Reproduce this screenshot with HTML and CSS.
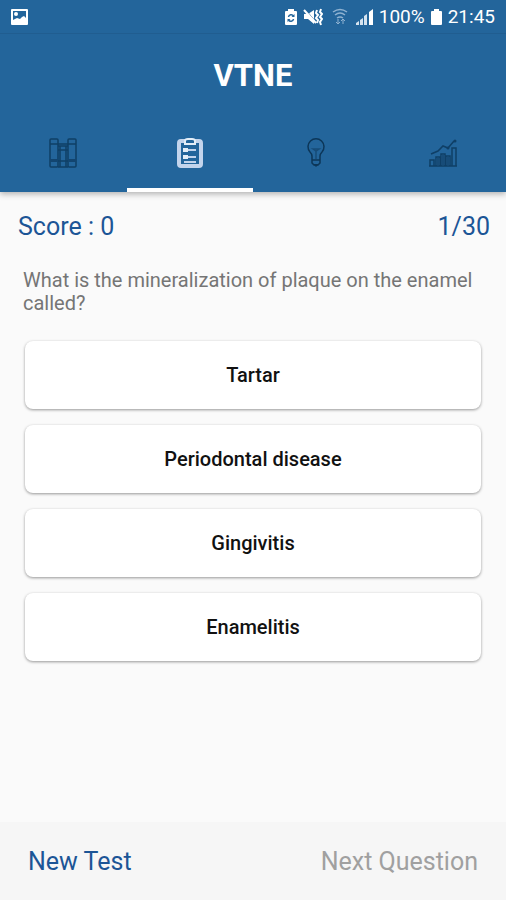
FILE: index.html
```html
<!DOCTYPE html>
<html lang="en">
<head>
<meta charset="utf-8">
<meta name="viewport" content="width=device-width, initial-scale=1">
<title>VTNE</title>
<link rel="stylesheet" href="styles.css">
</head>
<body>
<div class="screen">
  <header class="header">
    <div class="status">
      <svg class="status-photo" width="18" height="18" viewBox="0 0 18 18" aria-hidden="true">
        <rect x="1" y="1" width="17" height="16" rx="1" fill="#fff"/>
        <path d="M3 3h13v7l-2-2-2 1-2 2-3-1-4 2z" fill="#23659b"/>
        <circle cx="6" cy="6" r="2" fill="#fff"/>
      </svg>
      <div class="status-right">
        <svg width="14" height="18" viewBox="0 0 14 18" aria-hidden="true">
          <path d="M4 1h6v2h2q1 0 1 1v12q0 1-1 1H2q-1 0-1-1V4q0-1 1-1h2z" fill="#fff"/>
          <path d="M4.500 9a2.700 2.700 0 0 1 5-1M9.500 11a2.700 2.700 0 0 1-5 1" fill="none" stroke="#23659b" stroke-width="1.500"/>
          <path d="M10.500 6v3h-3zM3.500 14v-3h3z" fill="#23659b"/>
        </svg>
        <svg width="20" height="18" viewBox="0 0 20 18" aria-hidden="true">
          <path d="M1 6h4l6-4v14l-6-5H1z" fill="#fff"/>
          <path d="M2 1l11 13" stroke="#23659b"/>
          <path d="M1 2l12 13" stroke="#fff" stroke-width="2"/>
          <path d="M14 2l-1 3 2 2-2 3 2 2-1 3M18 1l-1 3 2 2-2 3 2 2-2 3 1 3" fill="none" stroke="#fff" stroke-width="2"/>
        </svg>
        <svg class="status-wifi" width="16" height="18" viewBox="0 0 16 18" aria-hidden="true">
          <path d="M1 4q7-5 14 0M3 7q5-4 10 0M5 10q3-2 6 0" fill="none" stroke="#8fb2d1" stroke-width="1.500"/>
          <path d="M6 11v5M4 14l2 2 2-2M11 16v-5M9 13l2-2 2 2" fill="none" stroke="#8fb2d1"/>
        </svg>
        <svg width="19" height="18" viewBox="0 0 19 18" aria-hidden="true">
          <path d="M1 17v-2l3-2v4zM5 17v-5l3-2v7zM9 17V8l3-2v11z" fill="#d5e3ef"/>
          <path d="M14 17V4l4-3v16z" fill="#fff"/>
        </svg>
        <span class="status-percent">100%</span>
        <svg width="13" height="18" viewBox="0 0 13 18" aria-hidden="true">
          <path d="M4 1h5v2h2q1 0 1 1v12q0 1-1 1H2q-1 0-1-1V4q0-1 1-1h2z" fill="#fff"/>
        </svg>
        <time>21:45</time>
      </div>
    </div>
    <h1 class="title">VTNE</h1>
    <nav class="tabs">
      <a class="tab" href="#library" aria-label="Library">
        <svg width="30" height="32" viewBox="0 0 30 32" aria-hidden="true">
          <g fill="none" stroke="#0f3f66" stroke-width="1.500">
            <rect x="2" y="2" width="8" height="28" rx="1"/>
            <rect x="20" y="2" width="8" height="28" rx="1"/>
            <path d="M10 7h10M10 9h10M10 13h10M10 24h10M10 30h10M12 9v21M18 9v21M2 7h8M20 7h8"/>
          </g>
          <path d="M2 22h8v3H2zM20 22h8v3h-8z" fill="#124570"/>
        </svg>
      </a>
      <a class="tab tab-active" href="#test" aria-label="Test" aria-current="page">
        <svg width="30" height="32" viewBox="0 0 30 32" aria-hidden="true">
          <rect x="4" y="4" width="22" height="25" rx="2" fill="none" stroke="#c3d4ec" stroke-width="4"/>
          <path d="M10 4q0-2 3-2h4q3 0 3 2v3H10z" fill="#23659b" stroke="#e3edf7" stroke-width="2"/>
          <path d="M8 11h5v4H8zM8 18h5v4H8z" fill="#e3edf7"/>
          <path d="M13 13h8M13 20h8M9 25h12" stroke="#c3d4ec" stroke-width="2"/>
        </svg>
      </a>
      <a class="tab" href="#tips" aria-label="Tips">
        <svg width="30" height="32" viewBox="0 0 30 32" aria-hidden="true">
          <g fill="none" stroke="#0c3658" stroke-width="1.500">
            <path d="M11 23v-4q0-2-2-4a8 8 0 1 1 12 0q-2 2-2 4v4zM11 23v3l2 2h4l2-2v-3"/>
          </g>
          <path d="M15 22v-8M12 12l3 2 3-2z" fill="none" stroke="#174c78" stroke-width="1.500"/>
          <path d="M12 27h6l-3 3z" fill="#0c3658"/>
        </svg>
      </a>
      <a class="tab" href="#progress" aria-label="Progress">
        <svg width="30" height="32" viewBox="0 0 30 32" aria-hidden="true">
          <g fill="none" stroke="#0f3f66" stroke-width="1.500">
            <path d="M2 29v-6h4v6zM8 29v-9h4v9zM13 29V17h4v12zM18 29V19h4v10zM24 29V11h4v18zM1 29h28"/>
            <path d="M3 17l7-3 5-5 5 2 6-7"/>
          </g>
          <circle cx="27" cy="4" r="1.500" fill="#0f3f66"/>
          <circle cx="20" cy="11" r="1.500" fill="#0f3f66"/>
          <path d="M8 21h4v7H8zM13 18h4v10h-4zM18 20h4v8h-4z" fill="#174c78"/>
        </svg>
      </a>
    </nav>
  </header>
  <main class="quiz">
    <div class="score">
      <span>Score : 0</span>
      <span>1/30</span>
    </div>
    <p class="question">What is the mineralization of plaque on the enamel called?</p>
    <div class="answers">
      <button class="answer" type="button">Tartar</button>
      <button class="answer" type="button">Periodontal disease</button>
      <button class="answer" type="button">Gingivitis</button>
      <button class="answer" type="button">Enamelitis</button>
    </div>
  </main>
  <footer class="footer">
    <button class="action" type="button">New Test</button>
    <button class="action" type="button" disabled>Next Question</button>
  </footer>
</div>
</body>
</html>
```
FILE: styles.css
```css
* {
  box-sizing: border-box;
}

body {
  margin: 0;
  font-family: Roboto, sans-serif;
  background: #fafafa;
}

svg {
  display: block;
}

button {
  font-family: inherit;
}

.screen {
  display: flex;
  flex-direction: column;
  min-height: 100vh;
}

.header {
  background: #23659b;
  color: #fff;
  box-shadow: 0 2px 6px rgba(0, 0, 0, 0.3);
}

.status {
  display: flex;
  align-items: center;
  justify-content: space-between;
  height: 34px;
  padding: 0 11px 0 10px;
  border-bottom: 1px solid #205d90;
  font-size: 19px;
}

.status-right {
  display: flex;
  align-items: center;
  gap: 5px;
}

.status-wifi {
  margin: 0 2px 0 4px;
}

.title {
  margin: 0;
  padding: 22px 0 21px;
  font-size: 31px;
  line-height: 40px;
  font-weight: 700;
  text-align: center;
}

.tabs {
  display: flex;
}

.tab {
  display: flex;
  flex: 1;
  justify-content: center;
  height: 75px;
  padding-top: 20px;
  border-bottom: 4px solid transparent;
}

.tab-active {
  border-bottom-color: #fff;
}

.quiz {
  flex: 1;
}

.score {
  display: flex;
  justify-content: space-between;
  padding: 20px 16px 0 18px;
  font-size: 25px;
  line-height: 30px;
  color: #1c5596;
}

.question {
  margin: 0;
  padding: 27px 23px 0;
  font-size: 20px;
  line-height: 23px;
  color: #757575;
}

.answers {
  display: grid;
  gap: 16px;
  padding: 26px 25px;
}

.answer {
  height: 68px;
  border: 0;
  border-radius: 8px;
  background: #fff;
  box-shadow: 0 1px 3px rgba(0, 0, 0, 0.4);
  color: #111;
  font-size: 20px;
  font-weight: 500;
}

.footer {
  display: flex;
  align-items: center;
  justify-content: space-between;
  height: 78px;
  padding: 2px 28px 0;
  background: #f6f6f6;
}

.action {
  padding: 0;
  border: 0;
  background: none;
  color: #1c5596;
  font-size: 25px;
  line-height: 30px;
}

.action:disabled {
  color: #a0a0a0;
}
```
